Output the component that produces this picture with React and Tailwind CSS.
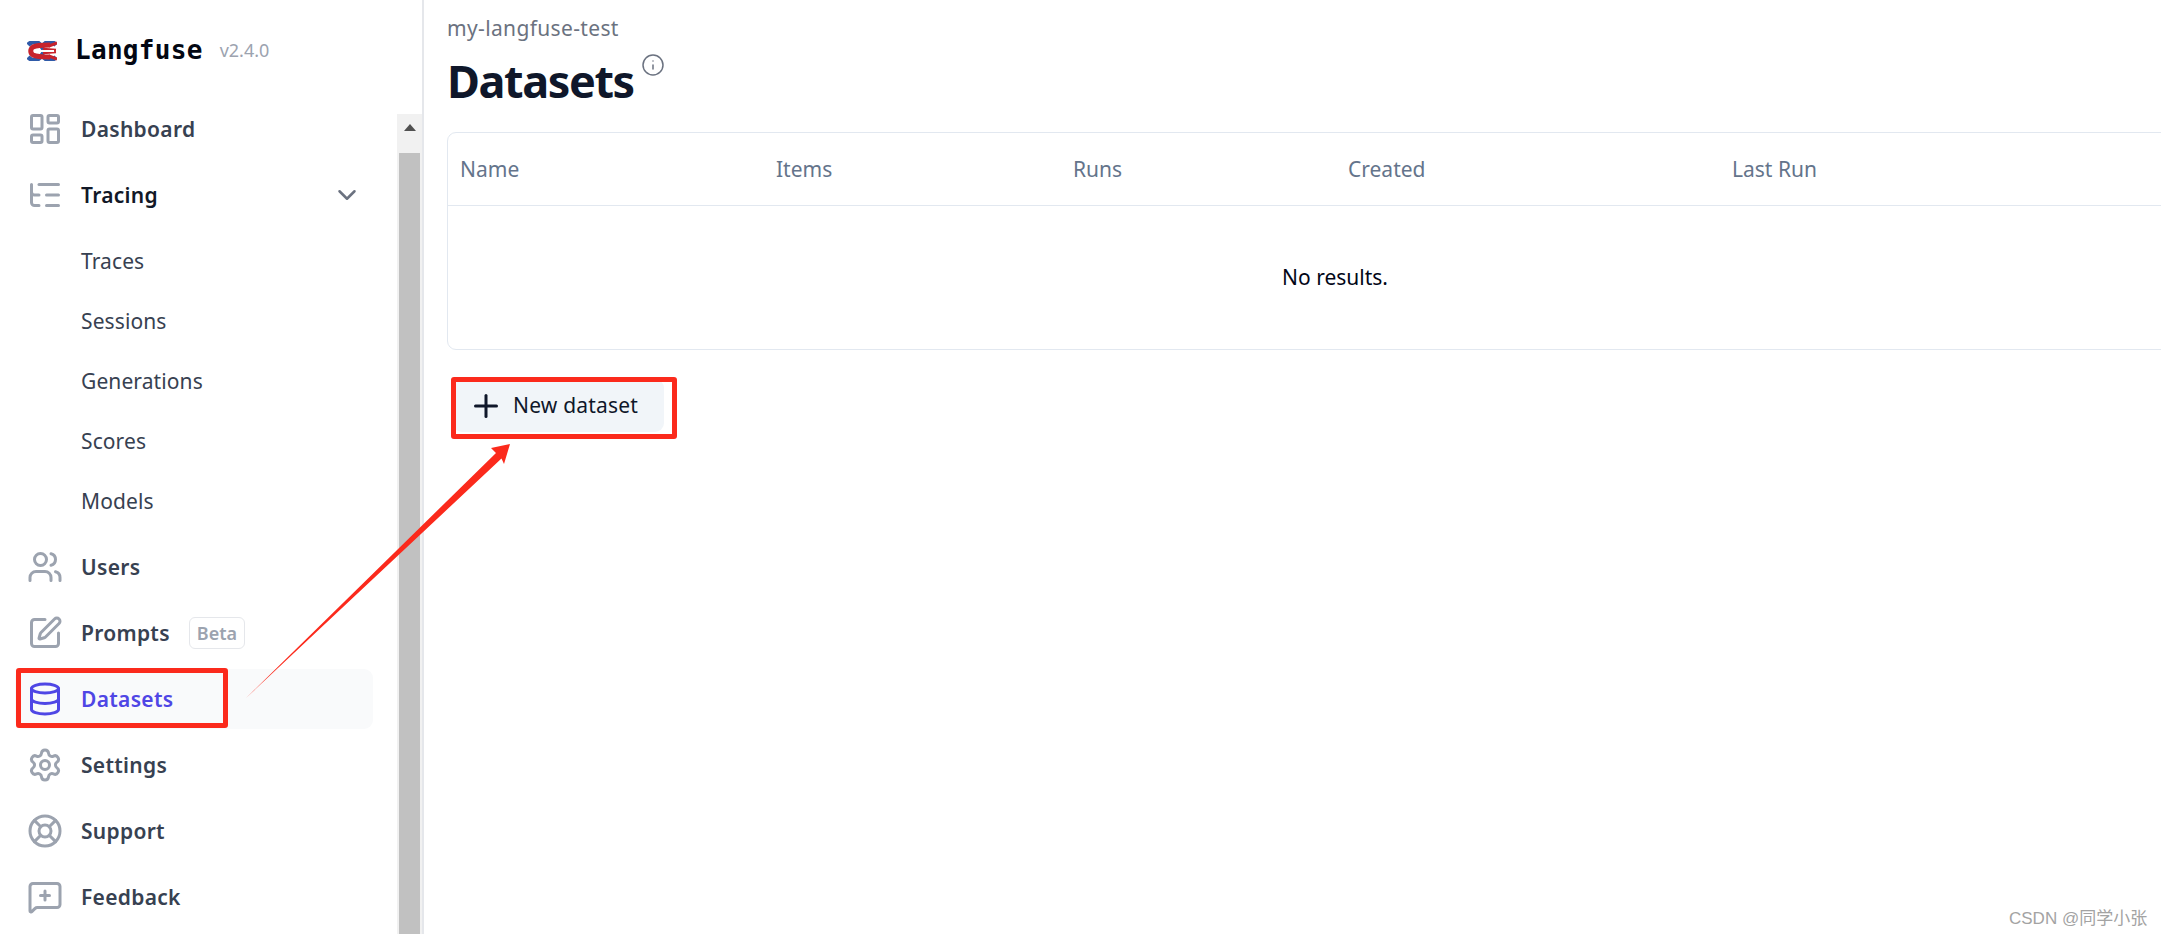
import {
  LayoutDashboard,
  ListTree,
  ChevronDown,
  Users,
  SquarePen,
  Database,
  Settings,
  LifeBuoy,
  MessageSquarePlus,
  Info,
  Plus,
} from 'lucide-react'

const SUB_ITEMS = ['Traces', 'Sessions', 'Generations', 'Scores', 'Models']
const COLUMNS = ['Name', 'Items', 'Runs', 'Created', 'Last Run']

const Logo = () => (
  <svg width="30" height="20" viewBox="0 0 30 20" fill="none" className="mt-[1px] shrink-0">
    <path d="M1 4 C6 -1 11 0 15 6 C19 0 24 -1 29 4" stroke="#2f5aa8" strokeWidth="4.5" />
    <path d="M1 16 C6 21 11 20 15 14 C19 20 24 21 29 16" stroke="#2f5aa8" strokeWidth="4.5" />
    <path d="M23 4 C16 4 10 4 6 6 C3 8 3 12 6 14 C10 16 16 16 23 16" stroke="#c8232c" strokeWidth="5" />
    <path d="M30 2 L22 5 M30 18 L22 15" stroke="#c8232c" strokeWidth="3" />
    <path d="M16 8 L29 9 M16 12 L29 11" stroke="#c8232c" strokeWidth="2.5" />
    <path d="M13 10 L27 10" stroke="#ffffff" strokeWidth="2" />
  </svg>
)

const NavItem = ({ icon: Icon, label, active, dark, badge, chevron }) => (
  <div
    className={`flex h-[60px] items-center gap-x-[18px] rounded-[9px] px-[12px] text-[21px] leading-[36px] font-semibold tracking-[0.3px] ${
      active ? 'bg-[#f9fafb] text-[#4f46e5]' : dark ? 'text-[#111827]' : 'text-[#374151]'
    }`}
  >
    <Icon size={36} strokeWidth={2} className={active ? 'text-[#4f46e5]' : 'text-[#9ca3af]'} />
    <span>{label}</span>
    {badge && (
      <span className="ml-[1px] flex h-[32px] items-center rounded-[6px] border border-[#e5e7eb] px-[7px] text-[18px] font-semibold tracking-normal text-[#9ca3af]">
        {badge}
      </span>
    )}
    {chevron && <ChevronDown size={30} strokeWidth={2} className="mr-[-1px] ml-auto text-[#6b7280]" />}
  </div>
)

const Sidebar = () => (
  <aside className="flex h-full w-[424px] shrink-0 border-r-2 border-[#e5e7eb]">
    <div className="min-w-0 flex-1 pr-[24px] pl-[15px]">
      <div className="flex h-[99px] items-center pt-[2px] pl-[12px]">
        <Logo />
        <span className="ml-[18px] font-['DejaVu_Sans_Mono',monospace] text-[26px] font-bold tracking-[0.3px] text-[#030712]">
          Langfuse
        </span>
        <span className="ml-[17px] text-[18px] text-[#9ca3af]">v2.4.0</span>
      </div>
      <nav className="flex flex-col gap-y-[6px]">
        <NavItem icon={LayoutDashboard} label="Dashboard" />
        <NavItem icon={ListTree} label="Tracing" dark chevron />
        <div className="flex flex-col">
          {SUB_ITEMS.map((item) => (
            <div key={item} className="flex h-[60px] items-center pt-[1px] pl-[66px] text-[21px] tracking-[0.1px] text-[#374151]">
              {item}
            </div>
          ))}
        </div>
        <NavItem icon={Users} label="Users" />
        <NavItem icon={SquarePen} label="Prompts" badge="Beta" />
        <NavItem icon={Database} label="Datasets" active />
        <NavItem icon={Settings} label="Settings" />
        <NavItem icon={LifeBuoy} label="Support" />
        <NavItem icon={MessageSquarePlus} label="Feedback" />
      </nav>
    </div>

    {/* browser scrollbar */}
    <div className="flex w-[25px] shrink-0 flex-col pt-[114px]">
      <div className="flex h-[39px] justify-center bg-[#f1f1f1] pt-[10px]">
        <div className="h-0 w-0 border-x-[6px] border-b-[7px] border-x-transparent border-b-[#505050]" />
      </div>
      <div className="flex-1 bg-[#f1f1f1] px-[2px]">
        <div className="h-full bg-[#c1c1c1]" />
      </div>
    </div>
  </aside>
)

const DatasetsTable = () => (
  <div className="w-[1776px] rounded-[9px] border border-[#e2e8f0]">
    <table className="w-full table-fixed">
      <colgroup>
        <col className="w-[316px]" />
        <col className="w-[297px]" />
        <col className="w-[275px]" />
        <col className="w-[384px]" />
        <col />
      </colgroup>
      <thead>
        <tr className="h-[72px] border-b border-[#e2e8f0]">
          {COLUMNS.map((col) => (
            <th key={col} className="px-[12px] pt-[1px] text-left text-[21px] font-normal text-[#64748b]">
              {col}
            </th>
          ))}
        </tr>
      </thead>
      <tbody>
        <tr className="h-[144px]">
          <td colSpan={5} className="text-center text-[21px] text-[#020617]">
            No results.
          </td>
        </tr>
      </tbody>
    </table>
  </div>
)

const Annotations = () => (
  <>
    <div className="absolute top-[668px] left-[16px] h-[60px] w-[212px] rounded-[3px] border-[5px] border-[#fb2a1c]" />
    <div className="absolute top-[377px] left-[451px] h-[62px] w-[226px] rounded-[3px] border-[5px] border-[#fb2a1c]" />
    <svg className="absolute top-0 left-0" width="2161" height="934">
      <polygon points="246,698 496,453 491,448 510,444 504,464 501.5,458.5" fill="#fb2a1c" />
    </svg>
    <span className="absolute top-[906px] left-[2009px] font-['Liberation_Sans','Noto_Sans_CJK_SC',sans-serif] text-[17px] text-[#a3a3a3]">
      CSDN @同学小张
    </span>
  </>
)

export default function App() {
  return (
    <div className="relative flex h-[934px] w-[2161px] overflow-hidden bg-white font-['Noto_Sans',sans-serif]">
      <Sidebar />
      <main className="min-w-0 flex-1 pl-[23px]">
        <div className="pt-[13px] text-[21px] leading-[30px] tracking-[0.35px] text-[#6b7280]">my-langfuse-test</div>
        <div className="mt-[11px] flex items-start">
          <h1 className="text-[45px] leading-[54px] font-bold tracking-[-1.4px] text-[#0f172a]">Datasets</h1>
          <Info size={24} strokeWidth={1.5} className="mt-[-1px] ml-[7px] text-[#6b7280]" />
        </div>
        <div className="mt-[24px]">
          <DatasetsTable />
        </div>
        <button className="mt-[29px] ml-[6px] flex h-[53px] w-[211px] items-center gap-x-[12px] rounded-[9px] bg-[#f1f5f9] pl-[18px] text-[21px] tracking-[0.2px] text-[#0f172a]">
          <Plus size={36} strokeWidth={2} className="m-[-3px]" />
          <span>New dataset</span>
        </button>
      </main>
      <Annotations />
    </div>
  )
}
